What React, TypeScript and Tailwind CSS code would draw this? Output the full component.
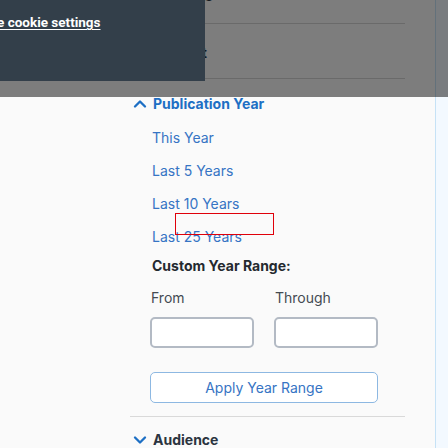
import { ChevronDown, ChevronUp } from 'lucide-react'

export default function App() {
  const links = ['This Year', 'Last 5 Years', 'Last 10 Years', 'Last 25 Years']
  return (
    <div className="relative w-[448px] h-[448px] overflow-hidden bg-[#fafafa] flex font-['Inter',sans-serif]">
      <div className="w-[130px] shrink-0" />

      {/* Facets column */}
      <div className="w-[275px] shrink-0 self-start flex flex-col">
        <div className="h-[24px] border-b border-[#d4d4d4] flex items-end">
          <span className="ml-[23px] text-[14px] font-bold text-[#2b3440] leading-none mb-[20px]">Subjects</span>
        </div>
        <div className="h-[55px] border-b border-[#d4d4d4] flex items-center gap-[2px]">
          <ChevronDown className="w-[20px] h-[20px] text-[#1d6fc4]" strokeWidth={2.8} />
          <span className="text-[14px] font-bold text-[#2b3440] mt-[3px]">Content</span>
        </div>

        {/* Publication Year */}
        <div className="flex items-center gap-[3px] pt-[15px]">
          <ChevronUp className="w-[20px] h-[20px] text-[#1d6fc4]" strokeWidth={2.8} />
          <span className="text-[14px] font-bold text-[#1d6fc4] leading-[20px]">Publication Year</span>
        </div>
        <div className="pl-[22px] flex flex-col gap-[13px] mt-[14px] relative">
          {links.map((l) => (
            <a key={l} className="text-[14px] text-[#3674c4] leading-[20px]">
              {l}
            </a>
          ))}
          <div className="absolute left-[45px] top-[85px] w-[99px] h-[22px] border-[1.5px] border-[#e0000a]" />
        </div>

        <div className="pl-[22px] mt-[9px] text-[14px] font-bold text-[#24292f] leading-[20px]">Custom Year Range:</div>

        <div className="pl-[20px] mt-[12px] flex gap-[20px]">
          <div className="flex flex-col w-[104px]">
            <label className="text-[14px] text-[#444a52] leading-[20px] pl-[1px]">From</label>
            <input className="mt-[9px] h-[31px] w-[104px] rounded-[5px] border-2 border-[#b3bac4] bg-white" />
          </div>
          <div className="flex flex-col w-[104px]">
            <label className="text-[14px] text-[#444a52] leading-[20px] pl-[1px]">Through</label>
            <input className="mt-[9px] h-[31px] w-[104px] rounded-[5px] border-2 border-[#b3bac4] bg-white" />
          </div>
        </div>

        <div className="pl-[20px] mt-[24px]">
          <button className="w-[228px] h-[31px] rounded-[5px] border border-[#8db8e2] bg-white text-[14px] text-[#3674c4]">
            Apply Year Range
          </button>
        </div>

        <div className="mt-[13px] border-t border-[#d9d9d9]" />

        <div className="flex items-center gap-[3px] pt-[13px]">
          <ChevronDown className="w-[20px] h-[20px] text-[#1d6fc4]" strokeWidth={2.8} />
          <span className="text-[14px] font-bold text-[#2b3440] leading-[20px]">Audience</span>
        </div>
      </div>

      <div className="w-[30px] shrink-0" />
      <div className="flex-1 border-l border-[#c6e2f6] bg-[#f3f9ff]" />

      {/* Modal overlay */}
      <div className="absolute left-0 top-0 w-full h-[97px] bg-black/50" />

      {/* Cookie banner */}
      <div className="absolute left-0 top-0 w-[205px] h-[81px] bg-[#333f4a] overflow-hidden">
        <a className="block -ml-[3px] mt-[12px] text-[13.5px] font-bold text-white underline underline-offset-[2px] whitespace-nowrap font-['Roboto',sans-serif]">
          e cookie settings
        </a>
      </div>
    </div>
  )
}
